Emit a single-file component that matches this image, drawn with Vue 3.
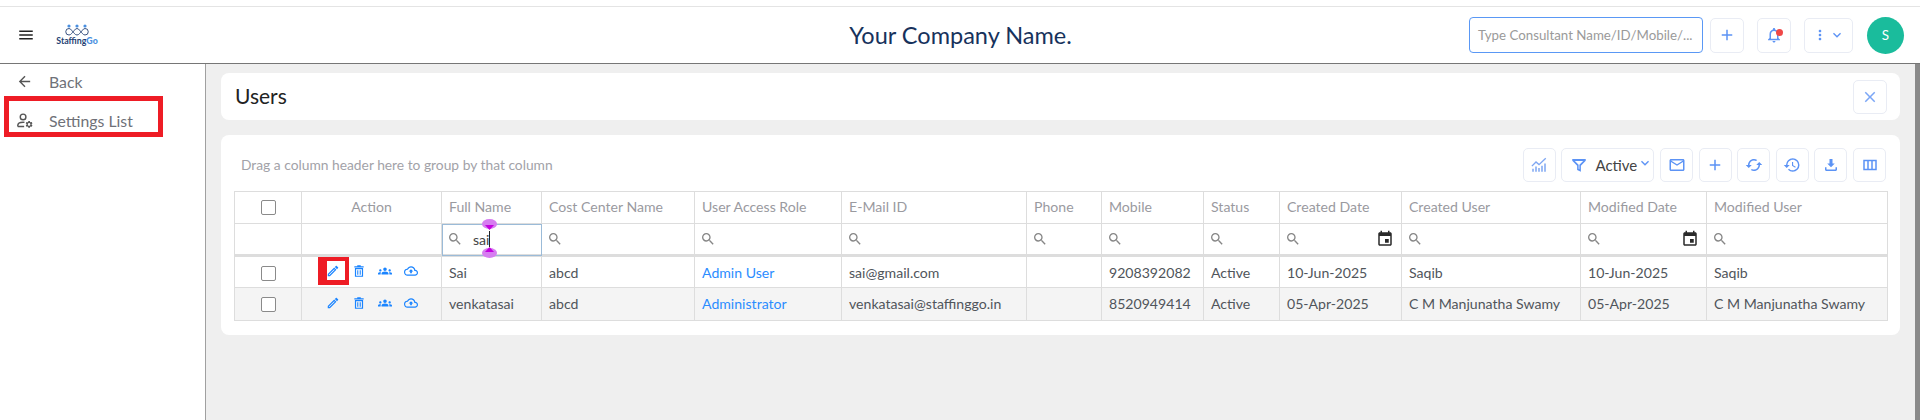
<template>
  <div class="page">
    <header class="topbar">
      <div class="brand">
        <button class="plain-btn">
          <svg class="ic-menu" viewBox="0 0 24 24"><path d="M3 18h18v-2H3v2zm0-5h18v-2H3v2zm0-7v2h18V6H3z" /></svg>
        </button>
        <div class="logo">
          <svg class="logo-mark" viewBox="0 0 24 12" fill="none">
            <circle cx="4" cy="2" r="1.6" fill="#4a8fe0" />
            <circle cx="12" cy="2" r="1.6" fill="#4a8fe0" />
            <circle cx="20" cy="2" r="1.6" fill="#4a8fe0" />
            <path d="M4 4.500c2.200 0 3.400 3.500 4 3.500s1.800-3.500 4-3.500 3.400 3.500 4 3.500 1.800-3.500 4-3.500a3 3 0 0 1 0 6.500c-2.200 0-3.400-3-4-3s-1.800 3-4 3-3.400-3-4-3-1.800 3-4 3a3 3 0 0 1 0-6.500z" stroke="#243f73" stroke-width="0.9" />
          </svg>
          <span class="logo-text">Staffing<b>Go</b></span>
        </div>
      </div>
      <div class="company">Your Company Name.</div>
      <div class="top-actions">
        <div class="global-search">Type Consultant Name/ID/Mobile/...</div>
        <button class="icon-btn">
          <svg viewBox="0 0 24 24"><path :d="icons.add" /></svg>
        </button>
        <button class="icon-btn bell-btn">
          <svg viewBox="0 0 24 24"><path :d="icons.bell" /></svg>
          <span class="dot"></span>
        </button>
        <button class="icon-btn more-btn">
          <svg viewBox="0 0 24 24"><path :d="icons.more" /></svg>
          <svg viewBox="0 0 24 24"><path :d="icons.chevron" /></svg>
        </button>
        <div class="avatar">S</div>
      </div>
    </header>

    <div class="body-row">
      <nav class="sidebar">
        <a class="side-link side-back">
          <svg viewBox="0 0 24 24"><path d="M20 11H7.830l5.590-5.590L12 4l-8 8 8 8 1.410-1.410L7.830 13H20v-2z" /></svg>
          Back
        </a>
        <a class="side-link side-active">
          <svg class="line-icon" viewBox="0 0 24 24">
            <circle cx="10" cy="7" r="4" />
            <path d="M2.500 20.500v-1.500c0-3 3.500-4.500 7.500-4.500.7 0 1.300 0 2 .2M2.500 20.500h9" />
            <path class="gear" transform="translate(12.500 11.500) scale(.5)" :d="icons.gear" />
          </svg>
          Settings List
          <span class="red-box"></span>
        </a>
      </nav>

      <main class="content">
        <section class="card title-card">
          <h1>Users</h1>
          <button class="icon-btn close-btn">
            <svg viewBox="0 0 24 24"><path :d="icons.close" /></svg>
          </button>
        </section>

        <section class="card grid-card">
          <div class="grid-toolbar">
            <span class="group-hint">Drag a column header here to group by that column</span>
            <div class="tools">
              <button class="icon-btn chart-btn">
                <svg viewBox="0 0 24 24">
                  <path d="M3 21v-4h2v4zM7 21v-7h2v7zM11 21v-5h2v5zM15 21v-8h2v8zM19 21V10h2v11z" />
                  <path d="M2.500 13.500 8 8l4 3.500L21 3" fill="none" stroke="currentColor" stroke-width="1.800" />
                </svg>
              </button>
              <button class="icon-btn filter-btn">
                <svg viewBox="0 0 24 24"><path d="M3 4h18v2.300L14.500 13v8l-5-2.500V13L3 6.300zM6.500 6.500l5 5.200v5.400l1 .5v-5.900l5-5.200z" fill-rule="evenodd" /></svg>
                <span>Active</span>
                <svg class="filter-chevron" viewBox="0 0 24 24"><path :d="icons.chevron" /></svg>
              </button>
              <button v-for="tool in tools" :key="tool" class="icon-btn">
                <svg viewBox="0 0 24 24"><path :d="tool" /></svg>
              </button>
            </div>
          </div>

          <table class="users-table">
            <colgroup>
              <col v-for="col in columns" :key="col.key" :style="{ width: col.width + 'px' }" />
            </colgroup>
            <thead>
              <tr class="head-row">
                <th v-for="col in columns" :key="col.key" :class="'col-' + col.key">
                  <span v-if="col.key === 'check'" class="check"></span>
                  <template v-else>{{ col.label }}</template>
                </th>
              </tr>
              <tr class="filter-row">
                <td v-for="col in columns" :key="col.key" :class="{ 'focused': col.key === 'name' }">
                  <div v-if="col.search" class="filter-cell">
                    <svg class="search" viewBox="0 0 24 24"><path :d="icons.search" /></svg>
                    <span v-if="col.key === 'name'" class="filter-value">sai</span>
                    <svg v-if="col.date" class="calendar" viewBox="0 0 24 24"><path :d="icons.event" /></svg>
                    <span v-if="col.key === 'name'" class="caret">
                      <i class="handle handle-top"></i>
                      <i class="handle handle-bottom"></i>
                    </span>
                  </div>
                </td>
              </tr>
            </thead>
            <tbody>
              <tr v-for="(row, index) in rows" :key="row.email">
                <td class="center"><span class="check"></span></td>
                <td>
                  <div class="row-actions">
                    <span class="action">
                      <svg viewBox="0 0 24 24"><path :d="icons.edit" /></svg>
                      <span v-if="index === 0" class="red-box edit-box"></span>
                    </span>
                    <span class="action"><svg viewBox="0 0 24 24"><path :d="icons.trash" fill-rule="evenodd" /></svg></span>
                    <span class="action"><svg viewBox="0 0 24 24"><path :d="icons.groups" /></svg></span>
                    <span class="action"><svg viewBox="0 0 24 24"><path :d="icons.cloud" /></svg></span>
                  </div>
                </td>
                <td>{{ row.name }}</td>
                <td>{{ row.cost }}</td>
                <td><a class="role">{{ row.role }}</a></td>
                <td>{{ row.email }}</td>
                <td></td>
                <td>{{ row.mobile }}</td>
                <td>{{ row.status }}</td>
                <td>{{ row.created }}</td>
                <td>{{ row.createdBy }}</td>
                <td>{{ row.modified }}</td>
                <td>{{ row.modifiedBy }}</td>
              </tr>
            </tbody>
          </table>
        </section>
      </main>

      <div class="scrollbar"></div>
    </div>
  </div>
</template>

<script setup>
const icons = {
  add: 'M19 13h-6v6h-2v-6H5v-2h6V5h2v6h6v2z',
  bell: 'M12 22c1.100 0 2-.9 2-2h-4c0 1.100.9 2 2 2zm6-6v-5c0-3.070-1.630-5.640-4.500-6.320V4c0-.83-.67-1.500-1.500-1.500s-1.500.67-1.500 1.500v.68C7.640 5.360 6 7.920 6 11v5l-2 2v1h16v-1l-2-2zm-2 1H8v-6c0-2.480 1.510-4.500 4-4.500s4 2.020 4 4.500v6z',
  more: 'M12 8c1.100 0 2-.9 2-2s-.9-2-2-2-2 .9-2 2 .9 2 2 2zm0 2c-1.100 0-2 .9-2 2s.9 2 2 2 2-.9 2-2-.9-2-2-2zm0 6c-1.100 0-2 .9-2 2s.9 2 2 2 2-.9 2-2-.9-2-2-2z',
  chevron: 'M16.590 8.590 12 13.170 7.410 8.590 6 10l6 6 6-6z',
  close: 'M19 6.410 17.590 5 12 10.590 6.410 5 5 6.410 10.590 12 5 17.590 6.410 19 12 13.410 17.590 19 19 17.590 13.410 12z',
  search: 'M15.500 14h-.79l-.28-.27A6.470 6.470 0 0 0 16 9.500 6.500 6.500 0 1 0 9.500 16c1.610 0 3.090-.59 4.230-1.570l.27.28v.79l5 4.990L20.490 19l-4.990-5zm-6 0C7.010 14 5 11.990 5 9.500S7.010 5 9.500 5 14 7.010 14 9.500 11.990 14 9.500 14z',
  event: 'M17 12h-5v5h5v-5zM16 1v2H8V1H6v2H5c-1.110 0-1.990.9-1.990 2L3 19c0 1.100.89 2 2 2h14c1.100 0 2-.9 2-2V5c0-1.100-.9-2-2-2h-1V1h-2zm3 18H5V8h14v11z',
  edit: 'M14.060 9.020l.92.92L5.920 19H5v-.92l9.060-9.060M17.660 3c-.25 0-.51.1-.7.29l-1.830 1.830 3.750 3.750 1.830-1.830a.996.996 0 0 0 0-1.410l-2.340-2.340c-.2-.2-.45-.29-.71-.29zm-3.600 3.190L3 17.250V21h3.750L17.810 9.940l-3.750-3.750z',
  trash: 'M9 2h6v2h5v2H4V4h5zM5 7h14v15H5zM7 9v11h10V9zM9 10.500h1.800v8H9zM13.200 10.500H15v8h-1.800z',
  groups: 'M12 12.750c1.630 0 3.070.39 4.240.9 1.080.48 1.760 1.560 1.760 2.730V18H6v-1.610c0-1.180.68-2.260 1.760-2.730 1.170-.52 2.610-.91 4.240-.91zM4 13c1.100 0 2-.9 2-2s-.9-2-2-2-2 .9-2 2 .9 2 2 2zm1.130 1.100c-.37-.06-.74-.1-1.130-.1-.99 0-1.930.21-2.780.58A2.010 2.010 0 0 0 0 16.430V18h4.500v-1.610c0-.83.23-1.610.63-2.290zM20 13c1.100 0 2-.9 2-2s-.9-2-2-2-2 .9-2 2 .9 2 2 2zm4 3.430c0-.81-.48-1.530-1.220-1.850A6.950 6.950 0 0 0 20 14c-.39 0-.76.04-1.130.1.4.68.63 1.460.63 2.290V18H24v-1.570zM12 6c1.660 0 3 1.340 3 3s-1.340 3-3 3-3-1.340-3-3 1.340-3 3-3z',
  cloud: 'M19.350 10.040A7.490 7.490 0 0 0 12 4C9.110 4 6.600 5.640 5.350 8.040A5.994 5.994 0 0 0 0 14c0 3.310 2.690 6 6 6h13c2.760 0 5-2.240 5-5 0-2.640-2.050-4.780-4.650-4.960zM19 18H6c-2.210 0-4-1.790-4-4 0-2.050 1.530-3.760 3.560-3.970l1.070-.11.5-.95A5.469 5.469 0 0 1 12 6c2.620 0 4.880 1.860 5.390 4.430l.3 1.500 1.530.11A2.980 2.980 0 0 1 22 15c0 1.650-1.350 3-3 3zM8 13h2.550v3h2.900v-3H16l-4-4z',
  gear: 'M19.140 12.940c.04-.3.06-.61.06-.94 0-.32-.02-.64-.07-.94l2.030-1.580a.49.49 0 0 0 .12-.61l-1.920-3.320a.488.488 0 0 0-.59-.22l-2.390.96c-.5-.38-1.030-.7-1.620-.94l-.36-2.540a.484.484 0 0 0-.48-.41h-3.840c-.24 0-.43.17-.47.41l-.36 2.540c-.59.24-1.130.57-1.620.94l-2.390-.96c-.22-.08-.47 0-.59.22L2.740 8.870c-.12.21-.08.47.12.61l2.030 1.580c-.05.3-.07.62-.07.94s.02.64.07.94l-2.030 1.580a.49.49 0 0 0-.12.61l1.920 3.320c.12.22.37.29.59.22l2.390-.96c.5.38 1.030.7 1.620.94l.36 2.540c.05.24.24.41.48.41h3.840c.24 0 .44-.17.47-.41l.36-2.540c.59-.24 1.130-.56 1.620-.94l2.390.96c.22.08.47 0 .59-.22l1.920-3.320c.12-.22.07-.47-.12-.61l-2.010-1.580zM12 15.600c-1.980 0-3.600-1.620-3.600-3.600s1.620-3.600 3.600-3.600 3.600 1.620 3.600 3.600-1.620 3.600-3.600 3.600z'
}

// toolbar buttons after the Active filter: mail, add, refresh, history, download, columns
const tools = [
  'M20 4H4c-1.100 0-1.990.9-1.990 2L2 18c0 1.100.9 2 2 2h16c1.100 0 2-.9 2-2V6c0-1.100-.9-2-2-2zm0 14H4V8l8 5 8-5v10zm-8-7L4 6h16l-8 5z',
  icons.add,
  'M19 8l-4 4h3c0 3.310-2.690 6-6 6a5.870 5.870 0 0 1-2.800-.7l-1.460 1.460A7.930 7.930 0 0 0 12 20c4.420 0 8-3.580 8-8h3l-4-4zM6 12c0-3.310 2.690-6 6-6 1.010 0 1.970.25 2.800.7l1.460-1.460A7.930 7.930 0 0 0 12 4c-4.420 0-8 3.580-8 8H1l4 4 4-4H6z',
  'M13 3a9 9 0 0 0-9 9H1l3.890 3.890.07.14L9 12H6c0-3.870 3.130-7 7-7s7 3.130 7 7-3.130 7-7 7c-1.930 0-3.680-.79-4.940-2.060l-1.420 1.420A8.954 8.954 0 0 0 13 21a9 9 0 0 0 0-18zm-1 5v5l4.280 2.540.72-1.210-3.500-2.080V8H12z',
  'M17 10h-3V4h-4v6H7l5 5 5-5zM4 15v3c0 1.100.9 2 2 2h12c1.100 0 2-.9 2-2v-3h-2v3H6v-3z',
  'M3 5v14h18V5H3zm5.330 12H5V7h3.330v10zm5.340 0h-3.340V7h3.340v10zM19 17h-3.330V7H19v10z'
]

const columns = [
  { key: 'check', label: '', width: 67 },
  { key: 'action', label: 'Action', width: 140 },
  { key: 'name', label: 'Full Name', width: 100, search: true },
  { key: 'cost', label: 'Cost Center Name', width: 153, search: true },
  { key: 'role', label: 'User Access Role', width: 147, search: true },
  { key: 'email', label: 'E-Mail ID', width: 185, search: true },
  { key: 'phone', label: 'Phone', width: 75, search: true },
  { key: 'mobile', label: 'Mobile', width: 102, search: true },
  { key: 'status', label: 'Status', width: 76, search: true },
  { key: 'created', label: 'Created Date', width: 122, search: true, date: true },
  { key: 'createdBy', label: 'Created User', width: 179, search: true },
  { key: 'modified', label: 'Modified Date', width: 126, search: true, date: true },
  { key: 'modifiedBy', label: 'Modified User', width: 181, search: true }
]

const rows = [
  {
    name: 'Sai', cost: 'abcd', role: 'Admin User', email: 'sai@gmail.com', mobile: '9208392082',
    status: 'Active', created: '10-Jun-2025', createdBy: 'Saqib', modified: '10-Jun-2025', modifiedBy: 'Saqib'
  },
  {
    name: 'venkatasai', cost: 'abcd', role: 'Administrator', email: 'venkatasai@staffinggo.in', mobile: '8520949414',
    status: 'Active', created: '05-Apr-2025', createdBy: 'C M Manjunatha Swamy', modified: '05-Apr-2025', modifiedBy: 'C M Manjunatha Swamy'
  }
]
</script>

<style scoped>
.page {
  height: 420px;
  overflow: hidden;
  display: flex;
  flex-direction: column;
  background: #fff;
  font-family: Lato, "Open Sans", sans-serif;
  font-size: 14.1px;
  color: #50555b;
}

button {
  font-family: inherit;
}

.topbar {
  margin-top: 6px;
  height: 58px;
  box-sizing: border-box;
  border-top: 1px solid #e4e4e4;
  border-bottom: 1px solid #767676;
  display: grid;
  grid-template-columns: 1fr auto 1fr;
  align-items: center;
  padding: 0 16px 0 17px;
  flex: none;
}

.brand {
  display: flex;
  align-items: center;
  gap: 20px;
}

.plain-btn {
  border: 0;
  background: none;
  padding: 0;
  display: flex;
}

.ic-menu {
  width: 18px;
  height: 18px;
  fill: #222;
}

.logo {
  display: flex;
  flex-direction: column;
  align-items: center;
  width: 44px;
}

.logo-mark {
  width: 24px;
  height: 12px;
}

.logo-text {
  font-size: 8.800px;
  font-weight: 700;
  line-height: 10px;
  color: #243f73;
  white-space: nowrap;
}

.logo-text b {
  color: #4a8fe0;
}

.company {
  font-size: 23.500px;
  color: #17325c;
  padding-bottom: 1px;
}

.top-actions {
  display: flex;
  align-items: center;
  justify-content: flex-end;
}

.global-search {
  width: 234px;
  height: 36px;
  box-sizing: border-box;
  border: 1px solid #5a98f5;
  border-radius: 4px;
  padding: 0 8px;
  margin-right: 7px;
  display: flex;
  align-items: center;
  font-size: 13.300px;
  color: #9a9a9a;
  white-space: nowrap;
}

.icon-btn {
  width: 34px;
  height: 35px;
  box-sizing: border-box;
  flex: none;
  border: 1px solid #e9ecf4;
  border-radius: 5px;
  background: #fff;
  padding: 0;
  display: flex;
  align-items: center;
  justify-content: center;
  color: #5c93f5;
  position: relative;
}

.icon-btn svg {
  width: 18px;
  height: 18px;
  fill: currentColor;
}

.bell-btn {
  margin-left: 13px;
}

.dot {
  position: absolute;
  top: 10px;
  left: 18px;
  width: 7px;
  height: 7px;
  border-radius: 50%;
  background: #f04848;
}

.more-btn {
  width: 49px;
  margin-left: 13px;
  gap: 1px;
}

.more-btn svg {
  width: 16px;
  height: 16px;
}

.avatar {
  width: 37px;
  height: 37px;
  margin-left: 14px;
  border-radius: 50%;
  background: #1abc9c;
  color: #fff;
  font-size: 13.500px;
  display: flex;
  align-items: center;
  justify-content: center;
}

.body-row {
  flex: 1;
  display: flex;
  min-height: 0;
}

.sidebar {
  width: 206px;
  box-sizing: border-box;
  flex: none;
  border-right: 1px solid #a0a0a0;
  display: flex;
  flex-direction: column;
}

.side-link {
  height: 38px;
  display: flex;
  align-items: center;
  gap: 16px;
  padding-left: 16px;
  font-size: 15.800px;
  color: #6f7178;
  position: relative;
}

.side-link svg {
  width: 17px;
  height: 17px;
  fill: #555;
}

.side-back {
  height: 34px;
}

.side-active {
  margin-top: 3px;
}

.side-link .line-icon {
  fill: none;
  stroke: #555;
  stroke-width: 2;
}

.line-icon .gear {
  fill: #555;
  stroke: none;
}

.red-box {
  position: absolute;
  left: 4px;
  top: -5px;
  width: 159px;
  height: 41px;
  box-sizing: border-box;
  border: 5px solid #ee1c25;
}

.content {
  flex: 1;
  min-width: 0;
  background: #efefef;
  padding: 9px 15px;
}

.card {
  background: #fff;
  border-radius: 8px;
}

.title-card {
  height: 47px;
  display: flex;
  align-items: center;
  justify-content: space-between;
  padding: 0 13px 0 14px;
}

.title-card h1 {
  margin: 0 0 2px;
  font-size: 21px;
  font-weight: 400;
  color: #222;
}

.close-btn {
  width: 34px;
  height: 34px;
  color: #7ba6f6;
}

.grid-card {
  margin-top: 15px;
  height: 200px;
  box-sizing: border-box;
  padding: 13px 13px 0;
}

.grid-toolbar {
  display: flex;
  align-items: center;
  justify-content: space-between;
  height: 34px;
  margin-bottom: 9px;
}

.group-hint {
  margin: 0 0 2px 7px;
  font-size: 13.800px;
  color: #a2a2a8;
}

.tools {
  display: flex;
  gap: 5.600px;
  margin-right: 1px;
}

.tools .icon-btn {
  width: 33px;
  height: 34px;
}

.chart-btn {
  color: #7ea6f2;
}

.tools .filter-btn {
  width: 93px;
  justify-content: flex-start;
  padding-left: 8px;
  font-size: 15px;
  color: #5c93f5;
}

.filter-btn span {
  color: #444;
  margin-left: 7px;
}

.filter-btn svg {
  flex: none;
}

.filter-chevron {
  position: absolute;
  right: 0;
  top: 6px;
  width: 16px !important;
  height: 16px !important;
}

.users-table {
  width: 1653px;
  table-layout: fixed;
  border-collapse: collapse;
}

.users-table th,
.users-table td {
  border: 1px solid #dddddd;
  padding: 0 7px;
  height: 32px;
  box-sizing: border-box;
  text-align: left;
  white-space: nowrap;
  overflow: hidden;
}

.users-table th {
  font-weight: 400;
  color: #9a9a9f;
  padding-bottom: 2px;
}

.users-table .col-check,
.users-table .col-action,
.users-table .center {
  text-align: center;
}

.users-table tbody tr:last-child td {
  height: 33px;
  padding-bottom: 1px;
}

.filter-row td {
  border-bottom: 3px solid #dddddd;
  overflow: visible;
}

.users-table td.focused {
  outline: 1px solid #9bbbd8;
  outline-offset: -1px;
  overflow: visible;
}

tbody tr:nth-child(even) {
  background: #f4f4f4;
}

.check {
  display: inline-block;
  width: 15px;
  height: 15px;
  box-sizing: border-box;
  border: 1px solid #8a8a8a;
  border-radius: 2px;
  background: #fff;
  vertical-align: middle;
}

.filter-cell {
  display: flex;
  align-items: center;
  position: relative;
  height: 20px;
}

.search {
  width: 16px;
  height: 16px;
  fill: #868686;
  margin-left: -2px;
  flex: none;
}

.filter-value {
  margin-left: 10px;
  color: #444;
}

.calendar {
  width: 18px;
  height: 18px;
  margin-left: auto;
  fill: #2a2a2a;
  flex: none;
}

.caret {
  position: absolute;
  left: 40px;
  top: 2px;
  width: 1px;
  height: 16px;
  background: #222;
}

.handle {
  position: absolute;
  left: -7px;
  width: 15px;
  height: 10px;
  border-radius: 50%;
  background: #d67df0;
}

.handle::after {
  content: "";
  position: absolute;
  left: 3px;
  width: 9px;
  height: 5px;
  background: #c400e0;
}

.handle-top {
  top: -12px;
}

.handle-top::after {
  top: 6px;
  clip-path: polygon(0 0, 100% 0, 50% 100%);
}

.handle-bottom {
  bottom: -11px;
}

.handle-bottom::after {
  bottom: 6px;
  clip-path: polygon(50% 0, 100% 100%, 0 100%);
}

.row-actions {
  display: flex;
  justify-content: center;
  gap: 10px;
  transform: translateY(-1px);
}

.action {
  width: 16px;
  height: 16px;
  position: relative;
  display: flex;
  align-items: center;
  justify-content: center;
}

.action svg {
  width: 14px;
  height: 14px;
  fill: #1a84ff;
  flex: none;
}

.red-box.edit-box {
  left: -7px;
  top: -7px;
  width: 31px;
  height: 29px;
  border-width: 5px 4px 5px 9px;
}

.role {
  color: #2b8cff;
}

.scrollbar {
  width: 5px;
  flex: none;
  background: #8a8a8a;
}
</style>
